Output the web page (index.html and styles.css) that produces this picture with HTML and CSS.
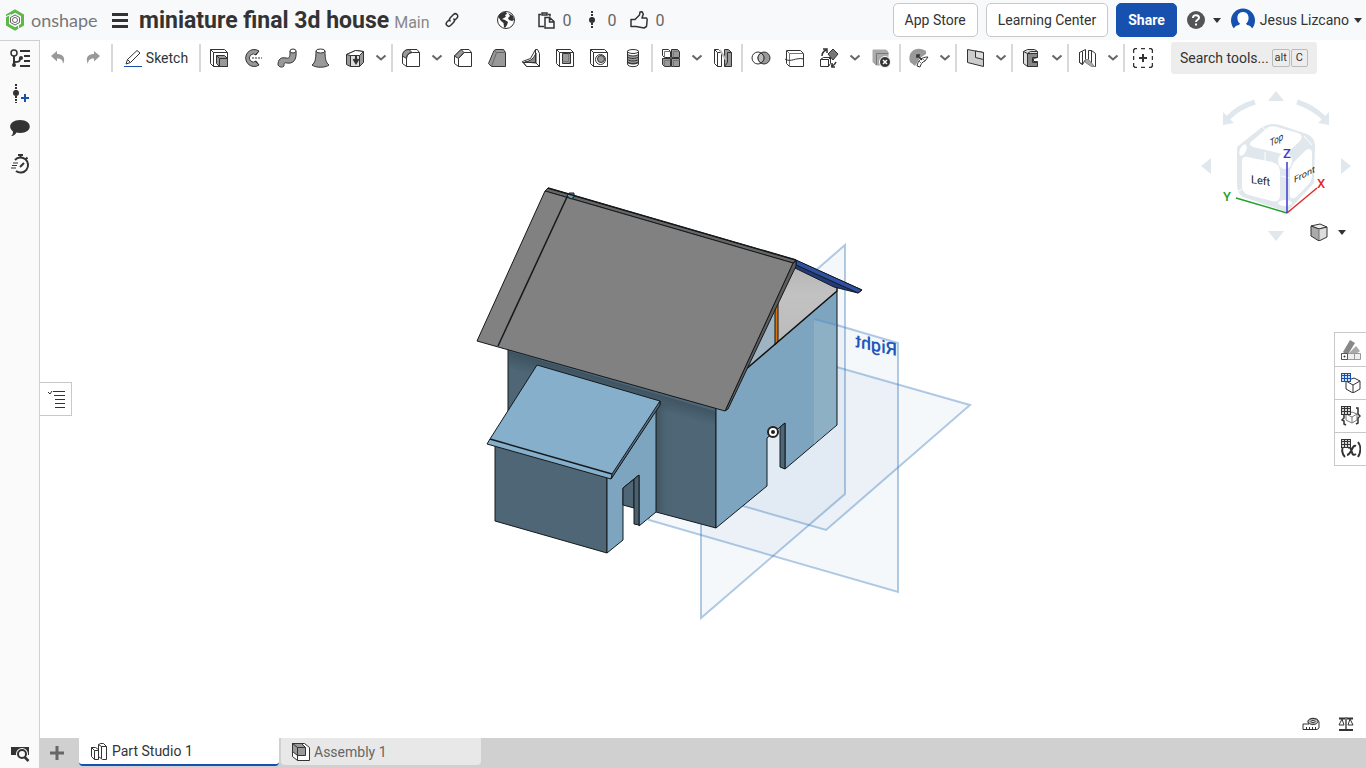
FILE: index.html
```html
<!DOCTYPE html>
<html lang="en">
<head>
    <meta charset="UTF-8">
    <meta name="viewport" content="width=device-width, initial-scale=1.0">
    <title>miniature final 3d house | Part Studio 1</title>
    <link rel="stylesheet" href="styles.css">
</head>
<body>
<svg class="defs" aria-hidden="true">
    <symbol id="chev" viewBox="0 0 12 8"><path d="M1.500 1.500L6 5.500L10.500 1.500" fill="none" stroke="#666" stroke-width="2"/></symbol>
    <symbol id="caret" viewBox="0 0 8 5"><path d="M0 0h8L4 5z" fill="#333"/></symbol>
    <symbol id="grid" viewBox="0 0 10 9"><path d="M0 0h10v9H0z" fill="currentColor" stroke="none"/><path d="M1 1h2v1H1zM4 1h2v1H4zM7 1h2v1H7zM1 3h2v2H1zM4 3h2v2H4zM7 3h2v2H7zM1 6h2v2H1zM4 6h2v2H4zM7 6h2v2H7z" fill="#fff" stroke="none" opacity=".8"/></symbol>
</svg>

<header class="header">
    <a class="logo" href="#" aria-label="onshape">
        <svg width="20" height="22" viewBox="0 0 20 22"><path d="M10 2L17.500 6.300v9.400L10 20L2.500 15.700V6.300z" fill="none" stroke="#5cb947" stroke-width="3"/><path d="M10 6l4.500 2.500v5L10 16l-4.500-2.500v-5z" fill="#fff" stroke="#666"/><circle cx="10" cy="11" r="2.500" fill="#fff" stroke="#666"/><path d="M0 8l6-2.500M14 20l-1-5" stroke="#f8f9fb"/></svg>
        <span>onshape</span>
    </a>
    <button class="menu" aria-label="Menu"><svg width="16" height="16" viewBox="0 0 16 16"><path d="M0 2.500h16M0 8.500h16M0 14.500h16" stroke="#333" stroke-width="3"/></svg></button>
    <h1>miniature final 3d house</h1>
    <span class="branch">Main</span>
    <button class="link" aria-label="Copy link"><svg width="16" height="16" viewBox="0 0 16 16" fill="none" stroke="#333" stroke-width="1.500"><path d="M6.500 9.500c-1.500-1.500-1-3 0-4l3-3c1-1 2.500-1 3.500 0s1 2.500 0 3.500l-2 2M9.500 6.500c1.500 1.500 1 3 0 4l-3 3c-1 1-2.500 1-3.500 0s-1-2.500 0-3.500l2-2"/></svg></button>
    <button class="globe" aria-label="Public document"><svg width="20" height="20" viewBox="0 0 20 20"><circle cx="10" cy="10" r="8.500" fill="#fff" stroke="#333"/><path d="M2 7C3 4 6 2 10 2l1 2l-2 1l1 1.500L8 8L6 9l3 1l3 2l-1 3l-2 3l-1-1l-.5-4L5 11L3 8zM12 3l5 3l1 4l-2 1l-3-1l-1-2l2-2z" fill="#333"/></svg></button>
    <button class="stat"><svg width="17" height="17" viewBox="0 0 17 17" fill="none" stroke="#333" stroke-width="1.500"><path d="M6 14.500H1V2.500h2M10 2.500h2v2"/><path d="M4 1h5v2H4z"/><path d="M7 5.500h4.500L16 9.500v6.500H7zM11.500 6v4H16"/></svg><span>0</span></button>
    <button class="stat dot"><svg width="8" height="18" viewBox="0 0 8 18"><circle cx="4" cy="9" r="3" fill="#333"/><path d="M4 0v18" stroke="#333" stroke-width="2" stroke-dasharray="2 1"/></svg><span>0</span></button>
    <button class="stat"><svg width="18" height="18" viewBox="0 0 18 18"><path d="M1 8.500h4L9.500 4L10 1l2-.3l1.300 2.300L12 7h4.500l.7 1.500l-.7 7L14 17L6 15.500H1z" fill="none" stroke="#333" stroke-width="1.500" stroke-linejoin="round"/></svg><span>0</span></button>
    <div class="account">
        <button class="btn">App Store</button>
        <button class="btn">Learning Center</button>
        <button class="btn share">Share</button>
        <button class="help" aria-label="Help"><svg width="18" height="18" viewBox="0 0 18 18"><circle cx="9" cy="9" r="9" fill="#555"/><path d="M6 7c0-4 6-3.500 6-.3C12 9 9 8.500 9 11" fill="none" stroke="#fff" stroke-width="2"/><path d="M8 12.500h2v2H8z" fill="#fff"/></svg><svg width="8" height="5"><use href="#caret"/></svg></button>
        <button class="user"><svg width="24" height="24" viewBox="0 0 24 24"><path d="M4 21.500A12 12 0 1 1 20 21.500z" fill="#1651b0"/><path d="M12 4c4 0 6 3 5.500 7c-.3 2-1 3.500-2.500 4.500l1 1.500c3 .5 5 2 5.500 5H2.500c.5-3 2.500-4.500 5.500-5l1-1.500C7.500 14.500 6.800 13 6.500 11C6 7 8 4 12 4z" fill="#fff"/></svg><span>Jesus Lizcano</span><svg width="8" height="5"><use href="#caret"/></svg></button>
    </div>
</header>

<div class="workspace">
    <nav class="rail">
        <button aria-label="Versions and history"><svg width="20" height="20" viewBox="0 0 20 20" fill="none" stroke="#333" stroke-width="2"><circle cx="4" cy="4" r="3" stroke-width="1.500"/><path d="M4 7v9M4 13c5 0 6 0 6-4M10 2h10M14 7h6M14 12h6M10 17h10"/><circle cx="4" cy="16" r="1" fill="#333"/><circle cx="11" cy="9" r="1" fill="#333"/></svg></button>
        <button aria-label="Create version"><svg width="20" height="20" viewBox="0 0 20 20"><path d="M6 0v19" stroke="#333" stroke-width="2" stroke-dasharray="2 1"/><circle cx="6" cy="9" r="3" fill="#333"/><path d="M11 14h8M15 10v8" stroke="#1651b0" stroke-width="2"/></svg></button>
        <button aria-label="Comments"><svg width="20" height="20" viewBox="0 0 20 20"><path d="M10 1c13 0 13 13 0 13c-1.500 0-2.500-.2-3.500-.5C5 16 3 17.500 1 17c1.500-1 2-2.500 2-4.500C-3 8 1 1 10 1z" fill="#333"/></svg></button>
        <button aria-label="Performance"><svg width="20" height="20" viewBox="0 0 20 20" fill="none" stroke="#333" stroke-width="2"><path d="M5 6a7.500 7.500 0 1 1 1 11M8 1h5M10.500 1v3M16 5l1.500-1.500M10 13l4-4"/><path d="M3 9h5M2 11.500h5M1 14h5" stroke-width="1"/></svg></button>
        <button class="rail-end" aria-label="Search document"><svg width="20" height="18" viewBox="0 0 20 18"><path d="M1 2h18v8H1z" fill="#333"/><circle cx="12" cy="9" r="6" fill="#fafafa"/><circle cx="12" cy="9" r="4" fill="#fafafa" stroke="#333" stroke-width="2"/><path d="M14.500 12l4 4" stroke="#333" stroke-width="2.500"/></svg></button>
    </nav>

    <div class="studio">
        <div class="toolbar">
            <button class="history" aria-label="Undo"><svg width="14" height="14" viewBox="0 0 14 14"><path d="M6 0v3c6 0 9 4 6 10c0-4-2-5.500-6-5.500v3L0 5z" fill="#999"/></svg></button>
            <button class="history" aria-label="Redo"><svg width="14" height="14" viewBox="0 0 14 14"><path d="M8 0v3C2 3-1 7 2 13c0-4 2-5.500 6-5.500v3L14 5z" fill="#999"/></svg></button>
            <i class="sep"></i>
            <button class="sketch"><svg width="18" height="18" viewBox="0 0 18 18"><path d="M2 15L3.500 10.500L13 1.500l3 2.500L6.500 13.500zM3.500 10.500l3 3" fill="#fff" stroke="#333"/><path d="M0 17.500h18" stroke="#1651b0"/></svg><span>Sketch</span></button>
            <i class="sep"></i>
            <button class="tool" aria-label="Extrude"><svg viewBox="0 0 20 20"><path d="M1.500 1.500h14l3 3v14h-14l-3-3z" fill="#fff"/><path d="M4.500 18.500v-14h14M4.500 4.500l-3-3"/><path d="M7.500 7.500h8l3 3v8h-8l-3-3z" fill="#999"/><path d="M7.500 7.500l3 3h8M10.500 10.500v8"/></svg></button>
            <button class="tool" aria-label="Revolve"><svg viewBox="0 0 20 20"><path d="M16 3A8.500 8.500 0 1 0 16 17L13 13a4 4 0 1 1 0-6z" fill="#999"/><path d="M16 3l-4 4M16 17l-4-4"/><path d="M9 10h10" stroke-dasharray="2 1"/></svg></button>
            <button class="tool" aria-label="Sweep"><svg viewBox="0 0 20 20"><path d="M1 17c0-6 3-8 8-7c4 1 4-2 4-7h6c1 9-3 13-9 12c-3-1-3 1-3 3c-2 2-5 1-6-1z" fill="#999"/><ellipse cx="16" cy="3" rx="3" ry="2" fill="#fff"/></svg></button>
            <button class="tool" aria-label="Loft"><svg viewBox="0 0 20 20"><path d="M5 3c0 8-1 12-4 14c4 3 13 3 17 0c-3-2-4-6-4-14z" fill="#999"/><ellipse cx="9.500" cy="3" rx="4.500" ry="2" fill="#fff"/></svg></button>
            <button class="tool" aria-label="Thicken"><svg viewBox="0 0 20 20"><path d="M1.500 6.500l9-4l8 1v11l-4 4h-9l-4-2z" fill="#999"/><path d="M1.500 6.500l9-4l8 1l-4 4h-9z" fill="#fff"/><path d="M5.500 7.500h9v11h-9z" fill="#ddd"/><path d="M11 7v7M8.500 11l2.500 4l2.500-4" stroke-width="2"/></svg></button>
            <button class="drop" aria-label="More create tools"><svg><use href="#chev"/></svg></button>
            <i class="sep"></i>
            <button class="tool" aria-label="Fillet"><svg viewBox="0 0 20 20"><path d="M1.500 15.500V8C1.500 4 4 1.500 8 1.500h8l2.500 3v14h-13z" fill="#fff"/><path d="M1.500 8c0-4 3-6.500 6.500-6.500l3 3c-4 1-5 3-5.500 6z" fill="#999"/><path d="M5.500 18.500V11c0-4 2-6.500 6-6.500h7"/></svg></button>
            <button class="drop" aria-label="More fillets"><svg><use href="#chev"/></svg></button>
            <button class="tool" aria-label="Chamfer"><svg viewBox="0 0 20 20"><path d="M1.500 15.500V8L8 1.500h8l2.500 3v14h-13z" fill="#fff"/><path d="M1.500 8L8 1.500l3 3l-5.500 6z" fill="#999"/><path d="M5.500 18.500v-8l5.500-6h7.500"/></svg></button>
            <button class="tool" aria-label="Draft"><svg viewBox="0 0 20 20"><path d="M1.500 15.500L7 2.500l2-1h7.500l2 3v14h-14z" fill="#999"/><path d="M7 2.500l2.500 2h9M9.500 4.500l-5 14" stroke="#666"/></svg></button>
            <button class="tool" aria-label="Rib"><svg viewBox="0 0 20 20"><path d="M1.500 13.500l8-3l5-9h2l2 4v13h-13z" fill="#fff"/><path d="M4 14c6-1 9-4 11-9v10z" fill="#888"/><path d="M14.500 1.500v13h-13M14.500 14.500l4 4M1.500 13.500l4 5"/></svg></button>
            <button class="tool" aria-label="Shell"><svg viewBox="0 0 20 20"><path d="M1.500 1.500h14l3 3v14h-14l-3-3z" fill="#fff"/><path d="M7.500 5.500h8v10h-8z" fill="#999"/><path d="M4.500 18.500v-14l-3-3M4.500 4.500h14"/><path d="M13.500 5.500v8h-6M13.500 13.500l2 2" stroke="#777"/></svg></button>
            <button class="tool" aria-label="Hole"><svg viewBox="0 0 20 20"><path d="M1.500 1.500h14l3 3v14h-14l-3-3z" fill="#fff"/><path d="M1.500 1.500l3 3h14M4.500 4.500v14"/><circle cx="11.500" cy="11.500" r="5" fill="#fff"/><circle cx="12" cy="11" r="3.500" fill="#999"/></svg></button>
            <button class="tool" aria-label="Thread"><svg viewBox="0 0 20 20"><path d="M4.500 3v13c0 3.500 11 3.500 11 0V3z" fill="#fff"/><path d="M4.500 6.500c3 2 8 2 11 0v8c-3 2-8 2-11 0z" fill="#999"/><ellipse cx="10" cy="3.500" rx="5.500" ry="2" fill="#fff"/><path d="M4.500 9c3 2 8 2 11 0M4.500 11.500c3 2 8 2 11 0M4.500 14c3 2 8 2 11 0"/></svg></button>
            <i class="sep"></i>
            <button class="tool" aria-label="Linear pattern"><svg viewBox="0 0 20 20"><path d="M1.500 1.500h6l2 2v6h-6l-2-2z" fill="#fff"/><path d="M10.500 1.500h6l2 2v6h-8zM1.500 10.500h8v8h-6l-2-2zM10.500 10.500h8v8h-8z" fill="#999"/><path d="M3.500 9.500v-6h6M12.500 9.500v-6h6M3.500 18.500v-6h6M12.500 18.500v-6h6" stroke="#777"/></svg></button>
            <button class="drop" aria-label="More patterns"><svg><use href="#chev"/></svg></button>
            <button class="tool" aria-label="Mirror"><svg viewBox="0 0 20 20"><path d="M1.500 1.500h4l3 3v14h-4l-3-3z" fill="#fff"/><path d="M1.500 1.500l3 3h4M4.500 4.500v14"/><path d="M11.500 1.500h4l3 3v14h-7z" fill="#999"/><path d="M14.500 4.500v10l-3 4M14.500 4.500h4"/><path d="M7 2l6 10" stroke="#bbb" stroke-width="2"/></svg></button>
            <i class="sep"></i>
            <button class="tool" aria-label="Boolean"><svg viewBox="0 0 20 20"><circle cx="13" cy="10" r="6" fill="#999"/><circle cx="7" cy="10" r="6"/><path d="M10 5c-4 3-4 7 0 10c4-3 4-7 0-10z" fill="#bbb"/></svg></button>
            <button class="tool" aria-label="Split"><svg viewBox="0 0 20 20"><path d="M1.500 2.500h14l3 3v13h-14l-3-3z" fill="#fff"/><path d="M1.500 2.500l3 3h14M4.500 5.500v13" stroke="#777"/><path d="M0 11c6 4 10-2 19 0"/></svg></button>
            <button class="tool" aria-label="Transform"><svg viewBox="0 0 20 20"><path d="M14 1l5 5l-5 6l-5-6z" fill="#777"/><path d="M1.500 11.500l3-2h7v6l-2 3h-8z" fill="#fff"/><path d="M1.500 11.500h8v7M9.500 11.500l2-2"/><path d="M3 8c0-4 2-5 4-6M4 1h4v4M12 18c3 0 4-2 5-4M13 15v4h3" stroke-width="1.500"/></svg></button>
            <button class="drop" aria-label="More transforms"><svg><use href="#chev"/></svg></button>
            <button class="tool" aria-label="Delete part"><svg viewBox="0 0 20 20"><path d="M2 2h13l2 2v13H5l-3-3z" fill="#aaa" stroke="#aaa"/><path d="M5.500 17V5.500h12" stroke="#777"/><circle cx="14" cy="14" r="5.500" fill="#333" stroke="#fff"/><path d="M12 12l4 4M16 12l-4 4" stroke="#fff" stroke-width="1.500"/></svg></button>
            <i class="sep"></i>
            <button class="tool" aria-label="Modify surface"><svg viewBox="0 0 20 20"><path d="M1 14C-2 4 7-3 17 3v3l-6 4l-5 8z" fill="#999" stroke="none"/><path d="M8 18c1-6 5-9 11-9l-3 4c-3 1-4 3-5 6z" fill="#fff"/><path d="M10 13l3 3M13 10l3 3" stroke="#777"/><path d="M13 12L8 7M8 10V7h3" stroke-width="1.500"/></svg></button>
            <button class="drop" aria-label="More surface tools"><svg><use href="#chev"/></svg></button>
            <i class="sep"></i>
            <button class="tool" aria-label="Plane"><svg viewBox="0 0 20 20"><path d="M2.500 1.500l16 3v14l-16-4z" fill="#ccc"/><path d="M10.500 3l8 1.500v7l-8-2z" fill="#ddd"/></svg></button>
            <button class="drop" aria-label="More planes"><svg><use href="#chev"/></svg></button>
            <i class="sep"></i>
            <button class="tool" aria-label="Frame"><svg viewBox="0 0 20 20"><path d="M2.500 3.500l4-2h7l3 2v6l-4 1v3h4v5h-10l-4-3z" fill="#ddd"/><path d="M6.500 5.500h10v4h-5v5h5v4h-10z" fill="#888"/><path d="M2.500 3.500l4 2l3-2h7"/></svg></button>
            <button class="drop" aria-label="More frames"><svg><use href="#chev"/></svg></button>
            <i class="sep"></i>
            <button class="tool" aria-label="Sheet metal"><svg viewBox="0 0 20 20"><path d="M2.500 4.500l6-3v10l-3 5l-3-2zM11.500 2.500h3l4 3v13h-2l-5-6z" fill="#fff"/><path d="M8.500 11.500h3l6 7h-3l-6-4z" fill="#aaa" stroke="#888"/><path d="M5.500 3.500v13M14.500 2.500v12M2.500 4.500v10l3 2"/></svg></button>
            <button class="drop" aria-label="More sheet metal"><svg><use href="#chev"/></svg></button>
            <i class="sep"></i>
            <button class="tool" aria-label="Add custom features"><svg viewBox="0 0 20 20"><path d="M4 .5H2L.5 2v3M.5 8v4M.5 15v3L2 19.500h2M8 .5h4M8 19.500h4M16 .5h2L19.500 2v3M19.500 8v4M19.500 15v3l-1.500 1.500h-2" stroke-width="1.500"/><path d="M10 6v8M6 10h8" stroke-width="2"/></svg></button>
            <button class="search"><span>Search tools...</span><kbd>alt</kbd><kbd>C</kbd></button>
        </div>

        <main class="canvas">
            <svg class="model" viewBox="40 76 1326 662" role="img" aria-label="House model">
                <defs>
                    <linearGradient id="shade" x1="0" y1="0" x2="1" y2="0"><stop offset="0" stop-color="#35474f" stop-opacity=".6"/><stop offset=".25" stop-color="#4e6675" stop-opacity="0"/></linearGradient>
                    <linearGradient id="gable" x1="0" y1="0" x2="0" y2="1"><stop offset="0" stop-color="#b5b5b5"/><stop offset=".4" stop-color="#c2c2c2"/><stop offset="1" stop-color="#bbb"/></linearGradient>
                    <linearGradient id="eave" gradientUnits="userSpaceOnUse" x1="610" y1="378" x2="605" y2="396"><stop offset="0" stop-color="#2c3d47" stop-opacity=".5"/><stop offset="1" stop-color="#2c3d47" stop-opacity="0"/></linearGradient>
                </defs>
                <!-- reference planes -->
                <g class="plane">
                    <path d="M845 245V494L701 618V370z"/>
                    <path d="M649 270L898 343V592L649 520z"/>
                    <path d="M721 334L970 405L826 530L577 458z"/>
                </g>
                <path d="M560 450L610 553L656 514L648 521L627 512V460z" fill="#fff"/>
                <!-- main block -->
                <g class="solid">
                    <path d="M508 345V411L656 512L716 528V405z" fill="#4e6676"/>
                    <path d="M716 528V405L745 370L837 291V425L785 469V423L767 438V486z" fill="#7da5bf"/>
                    <path d="M780 427L785 423V469L780 467z" fill="#4e6676"/>
                </g>
                <path d="M656 402L716 411V527L656 511z" fill="url(#shade)"/>
                <path d="M814 319L836 325V425L814 444z" fill="#8eb0c5"/>
                <path d="M814 319L836 325" stroke="#6f9cc6" stroke-width="2"/>
                <!-- gable -->
                <path d="M795 264L837 287V291L778 342V296z" fill="url(#gable)"/>
                <path d="M745 370L776 300V345z" fill="#9eb4c2"/>
                <path d="M775 304L778 298V342L775 345z" fill="#d97706" stroke="#17130a"/>
                <path d="M745 370L837 291V286" fill="none" stroke="#111" stroke-width="1.500"/>
                <!-- roof -->
                <g class="solid">
                    <path d="M795 260L862 290L858 293L834 287L795 268z" fill="#223a78"/>
                    <path d="M796 260L862 290L858 293L796 265z" fill="#2f50a3"/>
                    <path d="M793 263L796 261V266L728 409L725 411z" fill="#5d5d5d"/>
                    <path d="M545 191L548 188L796 260L793 263z" fill="#666"/>
                    <path d="M545 191L793 263L725 411L477 341z" fill="#818181"/>
                    <path d="M567 197L498 346" stroke-width="1.500"/>
                    <path d="M567 196L569 193L574 193V197L571 199z" fill="#6b9cb9"/>
                    <path d="M548 188L796 260" stroke-width="1.500"/>
                </g>
                <path d="M509 351L715 411V428L509 368z" fill="url(#eave)"/>
                <!-- annex -->
                <g class="solid">
                    <path d="M495 442V521L607 553V475z" fill="#4e6676"/>
                    <path d="M607 553V475L656 405V512L639 526V475L623 488V540z" fill="#7da5bf"/>
                    <path d="M623 488L634 479V508L623 505z" fill="#4e6676"/>
                    <path d="M634 479L639 475V525L634 524z" fill="#4a6170"/>
                    <path d="M537 365L660 401V404L611 479L487 444L490 439z" fill="#85afca"/>
                    <path d="M490 439L612 474" stroke-width="1.500"/>
                    <path d="M660 401L612 474L611 479L660 405z" fill="#54728a"/>
                </g>
                <!-- origin -->
                <circle cx="773" cy="432" r="5" fill="#fff" stroke="#222" stroke-width="2"/>
                <circle cx="773" cy="432" r="2" fill="#222"/>
                <text class="plane-name" transform="translate(897 356) scale(-1 1) skewY(-12)">Right</text>
            </svg>

            <div class="view-cube">
                <svg width="160" height="152" viewBox="1196 90 160 152" role="img" aria-label="View cube">
                    <path d="M1268 101h16l-8-10zM1268 231h16l-8 10zM1211 158v16l-10-8zM1341 158v16l10-8z" fill="#e0e8ee"/>
                    <path d="M1255 102Q1238 107 1227 119M1297 102Q1313 107 1325 119" fill="none" stroke="#e0e8ee" stroke-width="5"/>
                    <path d="M1223 112v13l11-2zM1329 112v13l-11-2z" fill="#e0e8ee"/>
                    <path d="M1237 147L1262 127Q1270 122 1280 125L1307 134Q1316 138 1315 148L1314 183L1287 212L1243 197Q1237 193 1237 185z" fill="#e0e8ee"/>
                    <path d="M1251 142L1266 129Q1270 125 1277 127L1298 133Q1305 136 1299 142L1288 152Q1284 155 1278 153L1253 147Q1248 145 1251 142z" fill="#fff"/>
                    <path d="M1247 157L1272 162Q1280 164 1280 172V195Q1280 203 1272 201L1249 195Q1242 193 1242 186V162Q1242 156 1247 157z" fill="#fff"/>
                    <path d="M1294 162L1306 150Q1312 147 1312 154V176Q1312 181 1308 185L1296 197Q1290 201 1290 194V170z" fill="#fff"/>
                    <ellipse cx="1243" cy="150" rx="3" ry="6" transform="rotate(25 1243 150)" fill="#fff"/>
                    <ellipse cx="1285" cy="161" rx="7" ry="8" fill="#fff"/>
                    <ellipse cx="1285" cy="203" rx="7" ry="3" fill="#fff"/>
                    <path d="M1304 136l8 9M1265 152v9M1281 176l9 2M1262 127l4 3M1237 192l5-3" fill="none" stroke="#fff"/>
                    <text class="face" transform="translate(1251 183) skewY(8)">Left</text>
                    <text class="face tiny" transform="translate(1294 183) skewY(-28)">Front</text>
                    <text class="face tiny" transform="translate(1270 147) rotate(-30) skewX(-30)">Top</text>
                    <path d="M1236 198L1287 213" stroke="#22a12b" stroke-width="1.500"/>
                    <path d="M1287 213L1317 188" stroke="#e02b2b" stroke-width="1.500"/>
                    <path d="M1287 213V162" stroke="#3a3ad0" stroke-width="1.500"/>
                    <text class="axis z" x="1283" y="158">Z</text>
                    <text class="axis y" x="1223" y="201">Y</text>
                    <text class="axis x" x="1317" y="188">X</text>
                </svg>
                <button class="shading" aria-label="View options"><svg width="18" height="18" viewBox="0 0 18 18" stroke="#333" stroke-linejoin="round"><path d="M1 3l9-2l7 3l-8 2z" fill="#eee"/><path d="M1 3l8 3v12l-8-5z" fill="#aaa"/><path d="M9 6l8-2v10l-8 4z" fill="#ddd"/><path d="M9 6v11" stroke="#ccc"/></svg><svg width="8" height="5"><use href="#caret"/></svg></button>
            </div>

            <button class="feature-toggle" aria-label="Feature list"><svg width="18" height="18" viewBox="0 0 18 18" fill="none" stroke="#333"><path d="M6 1.500h12M7 5.500h11M8 9.500h10M8 13.500h10M8 17.500h10"/><path d="M1 2l2 2l2-3"/></svg></button>

            <div class="side-tabs">
                <button aria-label="Appearance"><svg width="20" height="20" viewBox="0 0 20 20"><path d="M2 12L9 0l5 3l-8 13z" fill="#888"/><path d="M6 15l9-9l4 5l-9 7z" fill="#aaa"/><path d="M.5 13.500h19v6H.5z" fill="#eee" stroke="#999"/><path d="M.5 13.500h6v6h-6z" fill="#fff" stroke="#555"/><path d="M13.500 13v6" stroke="#999"/><circle cx="3.500" cy="16.500" r="1" fill="#333"/></svg></button>
                <button aria-label="Configurations"><svg class="blue" width="20" height="20" viewBox="0 0 20 20"><path d="M5 8l8-3l6 3v8l-7 4l-7-4zM5 8l7 4l7-4M12 12v8" fill="none" stroke="#333"/><use href="#grid" width="10" height="9"/></svg></button>
                <button aria-label="Configuration properties"><svg width="20" height="20" viewBox="0 0 20 20"><path d="M5 8l6-2l5 2v6l-5 3l-6-3zM5 8l6 3l5-3M11 11v6" fill="none" stroke="#777"/><path d="M3 9v3l-2 2l2 1v3l2 1M15 2h2v6l2 2l-2 2v5l-2 1" fill="none" stroke="#333" stroke-width="1.500"/><use href="#grid" width="10" height="9"/></svg></button>
                <button aria-label="Variables"><svg width="20" height="20" viewBox="0 0 20 20" fill="none" stroke="#333"><path d="M3 6c-3 4-2 9 1 12M17 3c3 4 3 10 0 15" stroke-width="2"/><path d="M7 9c5-3 2 10 8 6M15 7c-4-2-4 8-9 9" stroke-width="2"/><use href="#grid" width="10" height="9"/></svg></button>
            </div>

            <div class="measure">
                <button aria-label="Measure"><svg width="18" height="14" viewBox="0 0 18 14" stroke="#333"><path d="M6 5c0-5 10-5 11 0v6l-2 1.500H1V7h6z" fill="#fff"/><ellipse cx="11" cy="4.500" rx="5" ry="3" fill="#bbb"/><ellipse cx="11" cy="4.500" rx="2" ry="1" fill="#fff"/><path d="M1 12.500h14M4.500 10v3M7.500 10v3M10.500 10v3M13.500 10v3" fill="none"/></svg></button>
                <button aria-label="Mass properties"><svg width="16" height="16" viewBox="0 0 16 16" fill="none" stroke="#333"><path d="M1 2.500h14" stroke-width="2"/><path d="M8 1v12" stroke="#777" stroke-width="2"/><path d="M4 3L1 9h5zM12 3l-2 6h5z"/><path d="M1 13h14v2H1z" fill="#333" stroke="none"/></svg></button>
            </div>
        </main>

        <footer class="tabs">
            <button class="add-tab" aria-label="Add tab"><svg width="16" height="16" viewBox="0 0 16 16"><path d="M8 1v14M1 8h14" stroke="#666" stroke-width="3"/></svg></button>
            <a class="tab active" href="#"><svg width="18" height="18" viewBox="0 0 18 18" fill="#fff" stroke="#333"><path d="M1.500 5.500h4l3 2v10h-4l-3-3zM1.500 5.500l3 3v9M4.500 8.500h4"/><path d="M8.500 2.500l2-1h3l3 3v13h-4l-4-3zM8.500 2.500l3 2h5M11.500 4.500v12"/></svg><span>Part Studio 1</span></a>
            <a class="tab" href="#"><svg width="18" height="18" viewBox="0 0 18 18" fill="#fff" stroke="#333"><path d="M.5 .5h12l5 4v13h-12l-5-4z"/><path d="M.5 .5h9l4 4v8h-8l-5-4z" fill="#999"/><path d="M.5 .5l5 4h8M5.500 4.500v13" fill="none"/></svg><span>Assembly 1</span></a>
        </footer>
    </div>
</div>
</body>
</html>
```
FILE: styles.css
```css
* {
    box-sizing: border-box;
}
body {
    margin: 0;
    height: 100vh;
    display: flex;
    flex-direction: column;
    overflow: hidden;
    font-family: Roboto, "Liberation Sans", sans-serif;
    font-size: 14px;
    color: #333;
    background-color: #fff;
}
button {
    font: inherit;
    color: inherit;
    background: none;
    border: 0;
    padding: 0;
    display: flex;
    align-items: center;
    justify-content: center;
    cursor: pointer;
}
a {
    color: inherit;
    text-decoration: none;
}
svg {
    display: block;
    flex: none;
}
.defs {
    position: absolute;
    width: 0;
    height: 0;
}

/* header */
.header {
    height: 40px;
    display: flex;
    align-items: center;
    padding: 0 4px 0 5px;
    background-color: #f8f9fb;
    white-space: nowrap;
}
.logo {
    display: flex;
    align-items: center;
    gap: 6px;
    width: 107px;
    font-family: Lato, sans-serif;
    font-size: 18px;
    color: #777;
}
.menu {
    margin-right: 11px;
}
h1 {
    margin: 0;
    font-family: Roboto, sans-serif;
    font-size: 23px;
    font-weight: 700;
}
.branch {
    margin: 5px 14px 0 5px;
    font-size: 16px;
    color: #888;
}
.globe {
    margin: 0 22px 0 36px;
}
.stat {
    gap: 8px;
    margin-right: 16px;
    font-size: 16px;
    color: #666;
}
.dot {
    gap: 12px;
    margin-right: 13px;
}
.account {
    margin-left: auto;
    display: flex;
    align-items: center;
    gap: 8px;
}
.btn {
    height: 34px;
    padding: 0 11px;
    border: 1px solid #c8c8c8;
    border-radius: 5px;
    background-color: #fff;
}
.share {
    border-color: #1651b0;
    background-color: #1651b0;
    color: #fff;
    font-weight: 700;
}
.help {
    gap: 8px;
    margin-left: 2px;
}
.user {
    gap: 5px;
    margin-left: 2px;
}

.workspace {
    flex: 1;
    min-height: 0;
    display: flex;
}
.rail {
    width: 40px;
    display: flex;
    flex-direction: column;
    align-items: center;
    padding: 8px 0 5px;
    gap: 15px;
    background-color: #fafafa;
    border-top: 1px solid #d0d0d0;
    border-right: 1px solid #d0d0d0;
}
.rail-end {
    margin-top: auto;
}
.studio {
    flex: 1;
    min-width: 0;
    display: flex;
    flex-direction: column;
}

/* toolbar */
.toolbar {
    height: 36px;
    display: flex;
    align-items: center;
    white-space: nowrap;
}
.history {
    width: 35px;
}
.sketch {
    width: 84px;
    gap: 4px;
}
.sep {
    width: 2px;
    height: 28px;
    margin: 0 1px;
    background-color: #d8d8d8;
}
.tool {
    width: 34px;
    height: 32px;
}
.tool svg {
    width: 20px;
    height: 20px;
    fill: none;
    stroke: #333;
}
.drop {
    width: 18px;
    height: 32px;
}
.drop svg {
    width: 12px;
    height: 8px;
}
.search {
    height: 32px;
    margin-left: 11px;
    padding: 0 8px 0 9px;
    border-radius: 3px;
    background-color: #ededed;
}
.search span {
    margin-right: 3px;
}
kbd {
    min-width: 17px;
    height: 18px;
    margin-right: 1px;
    padding: 0 2px;
    border: 1px solid #bbb;
    border-radius: 2px;
    font-family: Roboto, sans-serif;
    font-size: 11px;
    line-height: 16px;
}

/* graphics area */
.canvas {
    flex: 1;
    min-height: 0;
    position: relative;
}
.model {
    width: 100%;
    height: 100%;
}
.plane path {
    fill: #3c78aa;
    fill-opacity: .05;
    stroke: #3f7cbf;
    stroke-opacity: .4;
    stroke-width: 2;
}
.solid {
    stroke: #15191c;
    stroke-linejoin: round;
}
.plane-name {
    font-size: 18px;
    font-weight: 500;
    fill: #1f57b8;
}
.view-cube {
    position: absolute;
    top: 14px;
    right: 10px;
}
.face {
    font-size: 11px;
    fill: #222;
}
.tiny {
    font-size: 9px;
}
.axis {
    font-size: 13px;
    font-weight: 500;
}
.x {
    fill: #e02b2b;
}
.y {
    fill: #22a12b;
}
.z {
    fill: #3a3ad0;
}
.shading {
    position: absolute;
    right: 10px;
    bottom: 1px;
    gap: 10px;
}
.feature-toggle {
    position: absolute;
    left: 0;
    top: 306px;
    width: 32px;
    height: 34px;
    border: 1px solid #c8c8c8;
    border-left: 0;
    background-color: #fff;
}
.side-tabs {
    position: absolute;
    right: 0;
    top: 256px;
    border: 1px solid #c8c8c8;
    border-right: 0;
    background-color: #fff;
}
.side-tabs button {
    width: 31px;
    height: 33px;
}
.side-tabs button + button {
    border-top: 1px solid #c8c8c8;
}
.blue {
    color: #1651b0;
}
.measure {
    position: absolute;
    right: 12px;
    bottom: 6px;
    display: flex;
    align-items: center;
    gap: 18px;
}

/* document tabs */
.tabs {
    height: 30px;
    display: flex;
    gap: 2px;
    background-color: #d0d0d0;
}
.add-tab {
    width: 33px;
    margin-right: 4px;
}
.tab {
    width: 200px;
    height: 27px;
    display: flex;
    align-items: center;
    gap: 4px;
    padding: 0 11px;
    border-radius: 0 0 4px 4px;
    background-color: #e8e8e8;
    color: #666;
}
.active {
    height: 28px;
    background-color: #fff;
    border-bottom: 2px solid #1651b0;
    color: #333;
}
```
